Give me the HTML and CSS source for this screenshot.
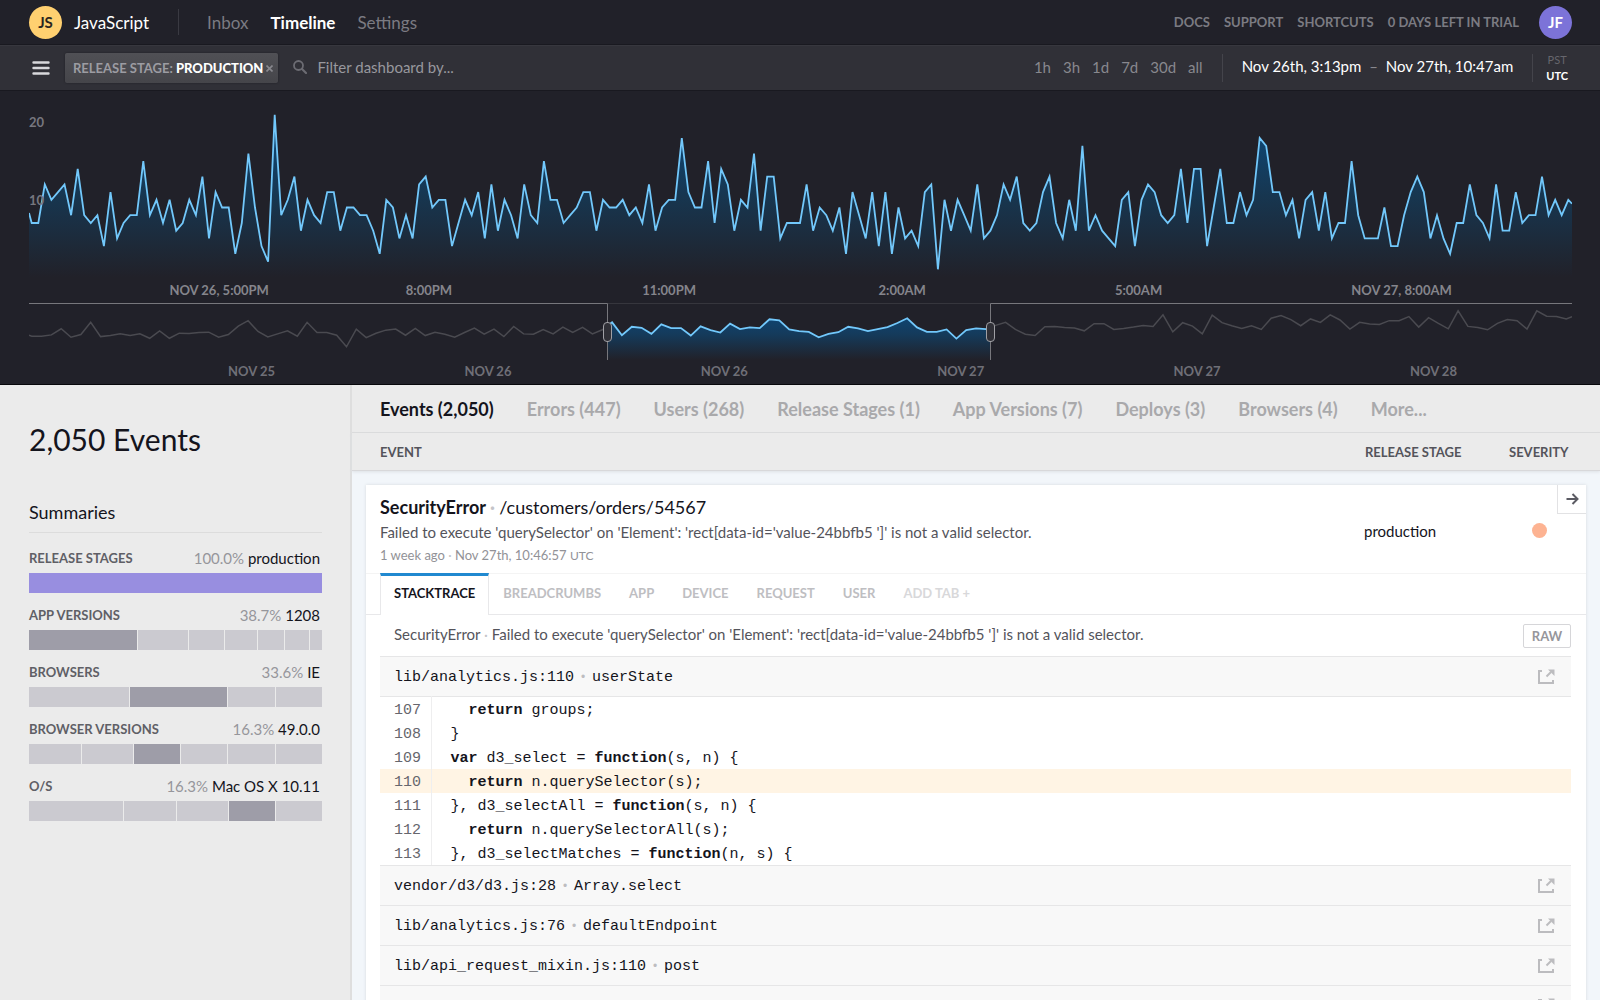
FILE: index.html
```
<!DOCTYPE html>
<html lang="en">
<head>
  <meta charset="UTF-8">
  <meta name="viewport" content="width=device-width, initial-scale=1.0">
  <title>JavaScript - Timeline</title>
  <link rel="stylesheet" href="styles.css">
</head>
<body>
  <svg class="sprite" width="0" height="0" aria-hidden="true">
    <symbol id="icon-external" viewBox="0 0 17 15">
      <path d="M4 2H1v12h14v-3" fill="none" stroke="currentColor" stroke-width="2"/>
      <path d="M8.500 7.500L13 3" fill="none" stroke="currentColor" stroke-width="2"/>
      <path d="M10 0.500h6.500V7z" fill="currentColor"/>
    </symbol>
  </svg>

  <header class="navbar">
    <span class="avatar avatar-project">JS</span>
    <a href="#" class="project">JavaScript</a>
    <nav class="main-nav">
      <a href="#">Inbox</a>
      <a href="#" class="active">Timeline</a>
      <a href="#">Settings</a>
    </nav>
    <nav class="help-nav">
      <a href="#">Docs</a>
      <a href="#">Support</a>
      <a href="#">Shortcuts</a>
      <a href="#">0 days left in trial</a>
    </nav>
    <button class="avatar avatar-user">JF</button>
  </header>

  <div class="toolbar">
    <button class="menu" aria-label="Menu">
      <svg width="18" height="14" viewBox="0 0 18 14"><path d="M1.500 1.500h15M1.500 7h15M1.500 12.500h15" stroke="#d8d8dc" stroke-width="2.400" stroke-linecap="round"/></svg>
    </button>
    <button class="chip">Release stage: <strong>Production</strong>
      <svg width="7" height="7" viewBox="0 0 7 7"><path d="M0.500 0.500l6 6M6.500 0.500l-6 6" stroke="#88888e" stroke-width="1.600"/></svg>
    </button>
    <label class="search">
      <svg width="14" height="14" viewBox="0 0 14 14"><circle cx="5.500" cy="5.500" r="4.500" fill="none" stroke="#6c6c73" stroke-width="1.800"/><path d="M9 9l4 4" stroke="#6c6c73" stroke-width="2.200" stroke-linecap="round"/></svg>
      <input type="text" placeholder="Filter dashboard by..." aria-label="Filter dashboard">
    </label>
    <div class="ranges">
      <button>1h</button>
      <button>3h</button>
      <button>1d</button>
      <button>7d</button>
      <button>30d</button>
      <button>all</button>
    </div>
    <button class="dates">Nov 26th, 3:13pm <span>–</span> Nov 27th, 10:47am</button>
    <div class="zone">
      <button>PST</button>
      <button class="active">UTC</button>
    </div>
  </div>

  <section class="timeline">
    <div class="chart">
      <svg id="eventChart" viewBox="0 0 1543 186" preserveAspectRatio="none">
        <defs>
          <linearGradient id="fill" gradientUnits="userSpaceOnUse" x1="0" y1="24" x2="0" y2="186">
            <stop offset="0" stop-color="#0c4a7c"/>
            <stop offset="0.500" stop-color="#173650"/>
            <stop offset="1" stop-color="#212129"/>
          </linearGradient>
        </defs>
        <path class="area" fill="url(#fill)"/>
        <path class="line"/>
      </svg>
      <span class="y-label y-20">20</span>
      <span class="y-label y-10">10</span>
    </div>
    <div class="ticks">
      <span>Nov 26, 5:00pm</span>
      <span>8:00pm</span>
      <span>11:00pm</span>
      <span>2:00am</span>
      <span>5:00am</span>
      <span>Nov 27, 8:00am</span>
    </div>
    <div class="overview">
      <svg id="overviewChart" viewBox="0 0 1543 168" preserveAspectRatio="none">
        <defs>
          <linearGradient id="fillSmall" gradientUnits="userSpaceOnUse" x1="0" y1="45" x2="0" y2="168">
            <stop offset="0" stop-color="#0f4470"/>
            <stop offset="0.400" stop-color="#153a5a"/>
            <stop offset="1" stop-color="#212129"/>
          </linearGradient>
          <clipPath id="selected"><rect x="578.500" y="0" width="383" height="168"/></clipPath>
        </defs>
        <path class="muted"/>
        <rect x="578.500" y="0" width="383" height="168" fill="#212129"/>
        <path class="area" fill="url(#fillSmall)" clip-path="url(#selected)"/>
        <path class="line" clip-path="url(#selected)"/>
        <path class="track" d="M578.500 1.500H961.500"/>
        <path class="bounds" d="M0 1.500H578.500V168M961.500 168V1.500H1543"/>
      </svg>
      <button class="handle handle-start" aria-label="Range start"></button>
      <button class="handle handle-end" aria-label="Range end"></button>
    </div>
    <div class="ticks ticks-overview">
      <span>Nov 25</span>
      <span>Nov 26</span>
      <span>Nov 26</span>
      <span>Nov 27</span>
      <span>Nov 27</span>
      <span>Nov 28</span>
    </div>
  </section>

  <div class="content">
    <aside class="sidebar">
      <h1>2,050 Events</h1>
      <h2>Summaries</h2>
      <div class="summary">
        <h3>Release stages</h3>
        <p>100.0% <b>production</b></p>
        <div class="bar"><i class="purple" style="flex-grow: 100"></i></div>
      </div>
      <div class="summary">
        <h3>App versions</h3>
        <p>38.7% <b>1208</b></p>
        <div class="bar">
          <i class="top" style="flex-grow: 324"></i><i style="flex-grow: 150"></i><i style="flex-grow: 104"></i><i style="flex-grow: 96"></i><i style="flex-grow: 79"></i><i style="flex-grow: 71"></i><i style="flex-grow: 36"></i>
        </div>
      </div>
      <div class="summary">
        <h3>Browsers</h3>
        <p>33.6% <b>IE</b></p>
        <div class="bar">
          <i style="flex-grow: 298"></i><i class="top" style="flex-grow: 290"></i><i style="flex-grow: 139"></i><i style="flex-grow: 138"></i>
        </div>
      </div>
      <div class="summary">
        <h3>Browser versions</h3>
        <p>16.3% <b>49.0.0</b></p>
        <div class="bar">
          <i style="flex-grow: 156"></i><i style="flex-grow: 150"></i><i class="top" style="flex-grow: 138"></i><i style="flex-grow: 138"></i><i style="flex-grow: 138"></i><i style="flex-grow: 138"></i>
        </div>
      </div>
      <div class="summary">
        <h3>O/S</h3>
        <p>16.3% <b>Mac OS X 10.11</b></p>
        <div class="bar">
          <i style="flex-grow: 281"></i><i style="flex-grow: 155"></i><i style="flex-grow: 150"></i><i class="top" style="flex-grow: 139"></i><i style="flex-grow: 136"></i>
        </div>
      </div>
    </aside>

    <main class="main">
      <nav class="pivots">
        <a href="#" class="active">Events (2,050)</a>
        <a href="#">Errors (447)</a>
        <a href="#">Users (268)</a>
        <a href="#">Release Stages (1)</a>
        <a href="#">App Versions (7)</a>
        <a href="#">Deploys (3)</a>
        <a href="#">Browsers (4)</a>
        <a href="#">More...</a>
      </nav>
      <div class="columns">
        <span>Event</span>
        <span>Release stage</span>
        <span>Severity</span>
      </div>

      <article class="card">
        <div class="event">
          <div class="event-info">
            <h2>SecurityError <i>·</i> <a href="#">/customers/orders/54567</a></h2>
            <p class="message">Failed to execute 'querySelector' on 'Element': 'rect[data-id='value-24bbfb5 ']' is not a valid selector.</p>
            <p class="meta">1 week ago <i>·</i> Nov 27th, 10:46:57 <small>UTC</small></p>
          </div>
          <span class="stage">production</span>
          <span class="severity"></span>
          <button class="open" aria-label="Open event">
            <svg width="13" height="12" viewBox="0 0 13 12"><path d="M0.500 6h11M6.500 1l5 5-5 5" fill="none" stroke="#5b5b63" stroke-width="2"/></svg>
          </button>
        </div>

        <div class="tabs">
          <button class="tab-button active">Stacktrace</button>
          <button class="tab-button">Breadcrumbs</button>
          <button class="tab-button">App</button>
          <button class="tab-button">Device</button>
          <button class="tab-button">Request</button>
          <button class="tab-button">User</button>
          <button class="tab-button add">Add tab +</button>
        </div>

        <div class="stack">
          <div class="stack-title">
            <p class="message">SecurityError <i>·</i> Failed to execute 'querySelector' on 'Element': 'rect[data-id='value-24bbfb5 ']' is not a valid selector.</p>
            <button class="raw">Raw</button>
          </div>
          <div class="frame">
            <span>lib/analytics.js:110<i>•</i>userState</span>
            <a href="#" aria-label="Open file"><svg width="17" height="15"><use href="#icon-external"/></svg></a>
          </div>
          <table class="code">
            <tr><th>107</th><td>  <b>return</b> groups;</td></tr>
            <tr><th>108</th><td>}</td></tr>
            <tr><th>109</th><td><b>var</b> d3_select = <b>function</b>(s, n) {</td></tr>
            <tr class="current"><th>110</th><td>  <b>return</b> n.querySelector(s);</td></tr>
            <tr><th>111</th><td>}, d3_selectAll = <b>function</b>(s, n) {</td></tr>
            <tr><th>112</th><td>  <b>return</b> n.querySelectorAll(s);</td></tr>
            <tr><th>113</th><td>}, d3_selectMatches = <b>function</b>(n, s) {</td></tr>
          </table>
          <div class="frame">
            <span>vendor/d3/d3.js:28<i>•</i>Array.select</span>
            <a href="#" aria-label="Open file"><svg width="17" height="15"><use href="#icon-external"/></svg></a>
          </div>
          <div class="frame">
            <span>lib/analytics.js:76<i>•</i>defaultEndpoint</span>
            <a href="#" aria-label="Open file"><svg width="17" height="15"><use href="#icon-external"/></svg></a>
          </div>
          <div class="frame">
            <span>lib/api_request_mixin.js:110<i>•</i>post</span>
            <a href="#" aria-label="Open file"><svg width="17" height="15"><use href="#icon-external"/></svg></a>
          </div>
          <div class="frame">
            <span></span>
            <a href="#" aria-label="Open file"><svg width="17" height="15"><use href="#icon-external"/></svg></a>
          </div>
        </div>
      </article>
    </main>
  </div>

  <script src="charts.js"></script>
</body>
</html>
```
FILE: styles.css
```
* {
  box-sizing: border-box;
}

body {
  margin: 0;
  height: 100vh;
  display: flex;
  flex-direction: column;
  overflow: hidden;
  font-family: Lato, "Open Sans", sans-serif;
  font-size: 15px;
  color: #14141c;
  background: #ebebeb;
}

button {
  font: inherit;
  color: inherit;
  background: none;
  border: none;
  padding: 0;
  cursor: pointer;
}

a {
  color: inherit;
  text-decoration: none;
}

h1, h2, h3, p {
  margin: 0;
  font-weight: normal;
}

i {
  font-style: normal;
}

svg {
  display: block;
}

.sprite {
  position: absolute;
}

/* top bar */
.navbar {
  flex: none;
  height: 45px;
  display: flex;
  align-items: center;
  padding: 0 28px 0 29px;
  background: #212129;
  border-bottom: 1px solid #191920;
  font-size: 17px;
  color: #7b7b82;
}

.avatar {
  width: 33px;
  height: 33px;
  flex: none;
  border-radius: 50%;
  display: flex;
  align-items: center;
  justify-content: center;
  font-size: 15px;
  font-weight: bold;
}

.avatar-project {
  background: #ffd070;
  color: #2b2620;
}

.avatar-user {
  background: #7c73d8;
  color: #fff;
}

.project {
  margin-left: 12px;
  color: #fff;
}

.main-nav {
  display: flex;
  align-items: center;
  gap: 22px;
  margin-left: 29px;
  padding-left: 28px;
  height: 26px;
  border-left: 1px solid #3a3a42;
}

.main-nav .active {
  color: #fff;
  font-weight: bold;
}

.help-nav {
  display: flex;
  gap: 14px;
  margin-left: auto;
  margin-right: 20px;
  font-size: 13px;
  font-weight: bold;
  text-transform: uppercase;
}

/* filters */
.toolbar {
  flex: none;
  height: 46px;
  display: flex;
  align-items: center;
  padding: 0 32px;
  background: #303037;
  border-top: 1px solid #37373e;
  border-bottom: 1px solid #191920;
  color: #88888e;
}

.chip {
  display: flex;
  align-items: center;
  gap: 3px;
  height: 30px;
  margin-left: 15px;
  padding: 0 5px 0 8px;
  border-radius: 2px;
  background: linear-gradient(#505055, #45454a);
  box-shadow: 0 0 2px #1c1c22;
  font-size: 13px;
  font-weight: bold;
  text-transform: uppercase;
  color: #9c9ca2;
}

.chip strong {
  color: #fff;
}

.search {
  flex: 1;
  display: flex;
  align-items: center;
  gap: 10px;
  margin-left: 15px;
  padding-bottom: 3px;
}

.search input {
  flex: 1;
  min-width: 0;
  padding: 0;
  border: none;
  outline: none;
  background: none;
  font: inherit;
  color: #fff;
}

.search input::placeholder {
  color: #98989e;
}

.ranges {
  display: flex;
  gap: 12px;
  margin-right: 19px;
  padding-bottom: 3px;
}

.dates {
  height: 28px;
  padding: 0 19px 4px;
  border-left: 1px solid #44444b;
  border-right: 1px solid #44444b;
  color: #fff;
}

.dates span {
  margin: 0 4px;
  color: #88888e;
}

.zone {
  display: flex;
  flex-direction: column;
  margin-left: 13px;
  font-size: 11px;
  line-height: 16px;
  color: #66666d;
}

.zone .active {
  color: #fff;
  font-weight: bold;
}

/* charts */
.timeline {
  flex: none;
  padding: 0 28px 0 29px;
  background: #212129;
  border-bottom: 1px solid #08080c;
}

.chart {
  position: relative;
}

.chart svg {
  width: 100%;
  height: 186px;
}

.timeline path {
  vector-effect: non-scaling-stroke;
}

.line {
  fill: none;
  stroke: #72c8fb;
  stroke-width: 1.8px;
}

.muted {
  fill: none;
  stroke: #4a4a50;
  stroke-width: 1.5px;
}

.track {
  stroke: #36363d;
}

.bounds {
  fill: none;
  stroke: #77777c;
}

.y-label {
  position: absolute;
  left: 0;
  font-size: 13px;
  font-weight: bold;
  line-height: 16px;
  color: #77777f;
}

.y-20 {
  top: 23px;
}

.y-10 {
  top: 101px;
}

.ticks {
  display: grid;
  grid-template-columns: 9.1% repeat(6, 15.32%);
  height: 26px;
  overflow: hidden;
  font-size: 13px;
  font-weight: bold;
  line-height: 26px;
  text-transform: uppercase;
  white-space: nowrap;
  color: #85858c;
}

.ticks::before {
  content: "";
}

.ticks-overview {
  grid-template-columns: 12.9% repeat(6, 15.32%);
  height: 24px;
  line-height: 22px;
  color: #6f6f77;
}

.overview {
  position: relative;
}

.overview svg {
  width: 100%;
  height: 57px;
}

.handle {
  position: absolute;
  top: 19px;
  width: 9px;
  height: 20px;
  margin-left: -4px;
  border: 1px solid #a0a0a5;
  border-radius: 4px;
  background: #303037;
}

.handle-start {
  left: 37.49%;
}

.handle-end {
  left: 62.31%;
}

/* summaries */
.content {
  flex: 1;
  min-height: 0;
  display: grid;
  grid-template-columns: 352px minmax(0, 1fr);
}

.sidebar {
  padding: 32px 28px 0 29px;
  border-right: 2px solid #dedede;
}

.sidebar h1 {
  font-size: 30px;
  line-height: 44px;
}

.sidebar h2 {
  margin: 39px 0 14px;
  padding-bottom: 8px;
  border-bottom: 1px solid #dcdcdc;
  font-size: 18px;
  line-height: 24px;
}

.summary {
  display: grid;
  grid-template-columns: auto auto;
  justify-content: space-between;
  align-items: center;
  margin-bottom: 11px;
}

.summary h3 {
  font-size: 13px;
  font-weight: bold;
  text-transform: uppercase;
  color: #5f5f66;
}

.summary p {
  padding-right: 2px;
  line-height: 22px;
  color: #96969b;
}

.summary b {
  font-weight: normal;
  color: #14141c;
}

.bar {
  grid-column: 1 / 3;
  display: flex;
  gap: 1px;
  height: 20px;
  margin-top: 4px;
}

.bar i {
  flex: 1 1 0;
  background: #cbcad0;
}

.bar .top {
  background: #9e9da8;
}

.bar .purple {
  background: #988ee0;
}

/* events */
.main {
  background: #f2f6fa;
}

.pivots {
  display: flex;
  align-items: center;
  gap: 33px;
  height: 48px;
  padding: 0 28px;
  background: #ebebeb;
  border-bottom: 1px solid #dadada;
  font-size: 18px;
  font-weight: bold;
  white-space: nowrap;
  color: #a9a9ab;
}

.pivots .active {
  color: #14141c;
}

.columns {
  display: grid;
  grid-template-columns: 1fr 144px 63px;
  align-items: center;
  height: 38px;
  padding: 0 28px;
  background: #ebebeb;
  border-bottom: 1px solid #d8d8da;
  box-shadow: 0 1px 3px #dde1e5;
  font-size: 13px;
  font-weight: bold;
  text-transform: uppercase;
  color: #54545b;
}

.card {
  margin: 14px 14px 0;
  background: #fff;
  box-shadow: 0 0 3px #d5dade;
}

.event {
  position: relative;
  display: grid;
  grid-template-columns: 1fr 168px 54px;
  align-items: center;
  height: 88px;
  padding: 3px 0 0 14px;
}

.event h2 {
  font-size: 18px;
  font-weight: bold;
  line-height: 26px;
}

.event h2 a {
  font-weight: normal;
}

.event h2 i, .message i, .meta i {
  color: #c4c4c8;
}

.message {
  line-height: 24px;
  color: #54545b;
}

.meta {
  font-size: 13px;
  line-height: 22px;
  color: #929297;
}

.meta small {
  font-size: 12px;
}

.severity {
  width: 15px;
  height: 15px;
  border-radius: 50%;
  background: #fdb392;
}

.open {
  position: absolute;
  top: 0;
  right: 0;
  width: 29px;
  height: 29px;
  display: flex;
  align-items: center;
  justify-content: center;
  border: solid #e2e2e4;
  border-width: 0 0 1px 1px;
}

.tabs {
  display: flex;
  height: 42px;
  padding-left: 14px;
  border-top: 1px solid #f4f4f4;
  box-shadow: inset 0 -1px #e8e8ea;
}

.tab-button {
  padding: 0 14px 4px;
  font-size: 13px;
  font-weight: bold;
  text-transform: uppercase;
  color: #bebec2;
}

.tab-button.active {
  margin-top: -1px;
  padding: 0 13px 5px;
  border: solid #e8e8ea;
  border-width: 0 1px;
  border-top: 3px solid #2089d0;
  background: #fff;
  color: #14141c;
}

.tab-button.add {
  color: #d8d8da;
}

.stack {
  padding: 0 15px 0 14px;
}

.stack-title {
  display: flex;
  align-items: center;
  justify-content: space-between;
  height: 41px;
  padding-left: 14px;
}

.stack-title .message {
  padding-bottom: 3px;
}

.raw {
  width: 48px;
  height: 24px;
  border: 1px solid #d6d6d9;
  border-radius: 2px;
  font-size: 13px;
  font-weight: bold;
  text-transform: uppercase;
  color: #96969b;
}

.frame {
  display: flex;
  align-items: center;
  justify-content: space-between;
  height: 40px;
  padding: 0 16px 0 14px;
  background: #f8f8f8;
  border-top: 1px solid #e6e6e7;
  font-family: "Liberation Mono", monospace;
  font-size: 15px;
}

.frame span {
  padding-top: 2px;
}

.frame i {
  display: inline-block;
  width: 18px;
  text-align: center;
  font-size: 12px;
  line-height: 12px;
  color: #bdbdc0;
}

.frame a {
  color: #bcbcbf;
}

.code {
  width: 100%;
  border-collapse: collapse;
  border-top: 1px solid #e6e6e7;
  font-family: "Liberation Mono", monospace;
  font-size: 15px;
  line-height: 21px;
}

.code th {
  width: 51px;
  padding: 3px 0 0 14px;
  border-right: 1px solid #eeeeef;
  font-weight: normal;
  text-align: left;
  color: #66666d;
}

.code td {
  padding: 3px 0 0 19px;
  white-space: pre;
}

.current {
  background: #fff4e4;
}
```
FILE: charts.js
```
const WIDTH = 1543;

const events = [
  7, 7, 12, 10, 11, 12, 8, 14, 8, 7, 8, 4, 11, 5, 7, 8, 8, 15, 8, 10, 7, 10, 6, 7, 10, 8, 13, 5, 11, 9,
  9, 3, 7, 16, 9, 4, 2, 21, 8, 10, 13, 6, 10, 8, 7, 11, 11, 6, 9, 9, 8, 8, 6, 3, 10, 9, 5, 8, 5, 12,
  13, 9, 10, 10, 4, 7, 10, 8, 11, 5, 12, 6, 10, 8, 5, 12, 8, 7, 15, 10, 10, 7, 8, 9, 11, 11, 6, 10, 9, 9,
  10, 8, 9, 7, 12, 6, 9, 10, 10, 18, 11, 9, 9, 15, 7, 14, 12, 6, 10, 9, 16, 6, 13, 13, 5, 7, 7, 7, 12, 6,
  9, 8, 6, 9, 3, 11, 8, 5, 11, 4, 11, 3, 9, 5, 6, 4, 11, 12, 1, 10, 6, 10, 8, 6, 12, 5, 6, 8, 12, 10,
  13, 7, 6, 7, 11, 13, 7, 5, 10, 6, 17, 6, 8, 6, 5, 4, 10, 11, 4, 10, 12, 11, 8, 7, 8, 14, 7, 14, 14, 4,
  9, 14, 7, 7, 11, 8, 10, 18, 17, 11, 11, 8, 10, 5, 10, 11, 6, 11, 5, 7, 7, 15, 8, 5, 5, 5, 9, 4, 4, 8,
  11, 13, 11, 5, 8, 5, 3, 7, 7, 12, 8, 7, 5, 12, 6, 6, 11, 7, 8, 8, 13, 8, 10, 8, 10
];

const overview = [
  98, 98, 94, 76, 101, 93, 57, 99, 96, 91, 96, 91, 104, 82, 104, 89, 90, 87, 86, 101, 93, 68, 52, 84, 100,
  91, 82, 98, 57, 87, 87, 95, 129, 77, 102, 89, 80, 77, 95, 75, 96, 86, 92, 101, 87, 74, 92, 77, 99, 69,
  91, 92, 78, 91, 71, 87, 72, 91, 79, 57, 95, 70, 73, 91, 63, 74, 74, 96, 69, 80, 87, 61, 77, 72, 74,
  48, 51, 78, 83, 85, 101, 91, 86, 70, 75, 83, 77, 71, 59, 45, 72, 85, 85, 78, 105, 80, 75, 77, 66, 57,
  78, 92, 96, 70, 69, 72, 74, 82, 61, 61, 78, 75, 71, 66, 69, 35, 85, 58, 68, 91, 36, 58, 67, 75, 67,
  78, 45, 37, 49, 67, 47, 57, 35, 50, 77, 57, 62, 63, 52, 52, 40, 71, 43, 60, 76, 23, 69, 72, 79, 60,
  49, 52, 77, 23, 39, 40, 47
];

// first point sits a little inside the left edge, the last one just before the right edge
function toPoints(values, first, last, toY, startY, endY) {
  const step = (last - first) / (values.length - 1);
  const points = values.map((v, i) => [first + i * step, toY(v)]);
  return [[0, startY], ...points, [WIDTH, endY]];
}

function draw(id, points, bottom) {
  const svg = document.getElementById(id);
  const d = 'M' + points.map(p => p[0].toFixed(1) + ' ' + p[1].toFixed(1)).join('L');
  svg.querySelectorAll('.line, .muted').forEach(p => p.setAttribute('d', d));
  svg.querySelector('.area').setAttribute('d', `${d}V${bottom}H0Z`);
}

const eventY = v => 186 - v * 7.72;
draw('eventChart', toPoints(events, 2.7, 1539.3, eventY, eventY(8.3), eventY(9.5)), 186);
draw('overviewChart', toPoints(overview, 2.7, 1537.3, v => v, 95, 40), 168);
```
